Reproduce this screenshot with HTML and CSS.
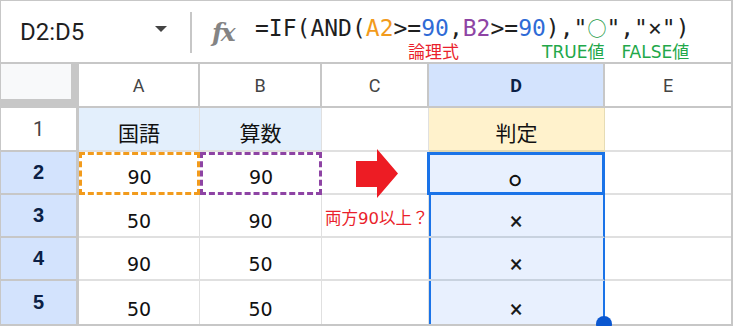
FILE: index.html
```html
<!DOCTYPE html>
<html lang="ja">
<head>
    <meta charset="UTF-8">
    <title>IF関数</title>
    <link rel="stylesheet" href="styles.css">
</head>
<body>
    <div class="frame">
        <div class="formula-bar">
            <div class="name-box">
                <span class="name">D2:D5</span>
                <span class="caret"></span>
            </div>
            <div class="divider"></div>
            <span class="fx">fx</span>
            <div class="formula">
                <div class="code">=IF(AND(<span class="ref-a">A2</span>&gt;=<span class="num">90</span>,<span class="ref-b">B2</span>&gt;=<span class="num">90</span>),"<span class="str">○</span>","<span class="x">×</span>")</div>
                <div class="notes">
                    <span class="note red">論理式</span>
                    <span class="note green true">TRUE値</span>
                    <span class="note green false">FALSE値</span>
                </div>
            </div>
        </div>

        <div class="grid">
            <div class="corner"><div class="corner-inner"></div></div>
            <div class="cell col-head">A</div>
            <div class="cell col-head">B</div>
            <div class="cell col-head">C</div>
            <div class="cell col-head on">D</div>
            <div class="cell col-head last">E</div>

            <div class="cell row-head plain">1</div>
            <div class="cell title">国語</div>
            <div class="cell title">算数</div>
            <div class="cell"></div>
            <div class="cell result-title">判定</div>
            <div class="cell last"></div>

            <div class="cell row-head">2</div>
            <div class="cell copy-a">90</div>
            <div class="cell copy-b">90</div>
            <div class="cell arrow-cell">
                <svg width="42" height="49" viewBox="0 0 42 49"><polygon points="0,12 21,12 21,0 42,24.5 21,49 21,38 0,38" fill="#ed1c24"/></svg>
            </div>
            <div class="cell sel active"><span class="mark">○</span></div>
            <div class="cell last"></div>

            <div class="cell row-head">3</div>
            <div class="cell">50</div>
            <div class="cell">90</div>
            <div class="cell ask">両方90以上？</div>
            <div class="cell sel"><span class="cross">×</span></div>
            <div class="cell last"></div>

            <div class="cell row-head">4</div>
            <div class="cell">90</div>
            <div class="cell">50</div>
            <div class="cell"></div>
            <div class="cell sel"><span class="cross">×</span></div>
            <div class="cell last"></div>

            <div class="cell row-head bottom">5</div>
            <div class="cell bottom">50</div>
            <div class="cell bottom">50</div>
            <div class="cell bottom"></div>
            <div class="cell sel bottom"><span class="cross">×</span><span class="handle"></span></div>
            <div class="cell last bottom"></div>
        </div>
    </div>
</body>
</html>
```

FILE: styles.css
```css
* {
    margin: 0;
    padding: 0;
    box-sizing: border-box;
}

body {
    background: #fff;
    font-family: "DejaVu Sans", "Noto Sans CJK JP", sans-serif;
    color: #111;
}

.frame {
    width: 733px;
    border-top: 1px solid #c7c7c7;
    border-left: 1px solid #c7c7c7;
    border-right: 2px solid #c7c7c7;
    border-bottom: 2px solid #c7c7c7;
}

/* formula bar */

.formula-bar {
    display: flex;
    align-items: flex-start;
    height: 63px;
    border-bottom: 2px solid #c7c7c7;
}

.name-box {
    width: 189px;
    height: 61px;
    display: flex;
    align-items: center;
    justify-content: space-between;
    padding: 0 23px 0 19px;
}

.name {
    font: 24px Roboto, sans-serif;
    color: #1f1f1f;
}

.caret {
    border-left: 6px solid transparent;
    border-right: 6px solid transparent;
    border-top: 6px solid #444;
    margin-top: -6px;
}

.divider {
    width: 2px;
    height: 41px;
    margin-top: 11px;
    background: #c7c7c7;
}

.fx {
    margin: 17px 0 0 20px;
    width: 43px;
    font: italic bold 25px "DejaVu Serif", serif;
    color: #848484;
    letter-spacing: -2px;
}

.formula {
    padding-top: 13px;
}

.code {
    font: 23px "DejaVu Sans Mono", "Liberation Mono", monospace;
    line-height: 28px;
    color: #1f1f1f;
    white-space: nowrap;
}

.ref-a { color: #f29b1c; }
.ref-b { color: #8e44a4; }
.num { color: #2f6bd6; }

.str {
    color: #1e9b48;
    font-family: "Noto Sans CJK JP", sans-serif;
    font-size: 19px;
}

.notes {
    display: flex;
    font-size: 17px;
    line-height: 20px;
}

.note.red {
    color: #ea1f2c;
    margin-left: 153px;
}

.note.green {
    color: #22a84a;
}

.note.true {
    margin-left: 83px;
}

.note.false {
    margin-left: 17px;
}

/* grid */

.grid {
    display: grid;
    grid-template-columns: 78px 121px 122px 107px 176px 126px;
    grid-template-rows: 44px 44px 43px 43px 43px 43px;
}

.corner {
    background: #c7c7c7;
    padding: 0 8px 9px 0;
}

.corner-inner {
    height: 100%;
    background: #f8f9fa;
}

.cell {
    display: flex;
    align-items: flex-end;
    justify-content: center;
    padding-bottom: 3px;
    border-right: 1px solid #e0e0e0;
    border-bottom: 2px solid #e0e0e0;
    font-size: 19px;
    line-height: 24px;
}

.cell.last {
    border-right: none;
}

.cell.bottom {
    border-bottom: none;
}

.col-head {
    align-items: center;
    padding: 0;
    font: 18px Roboto, sans-serif;
    color: #444;
    border-right: 2px solid #c7c7c7;
    border-bottom: 2px solid #c7c7c7;
}

.col-head.on {
    background: #d3e3fd;
    color: #0b1f46;
    font-weight: bold;
}

.row-head {
    align-items: center;
    padding: 0;
    background: #d3e3fd;
    border-right: 3px solid #c7c7c7;
    border-bottom: 2px solid #c7c7c7;
    font: bold 20px "Liberation Sans", sans-serif;
    color: #0b1f46;
}

.row-head.plain {
    background: #fff;
    font-weight: normal;
    font-family: Roboto, sans-serif;
    color: #444;
}

.row-head.bottom {
    border-bottom: none;
}

.title {
    background: #e3effc;
    font-size: 21px;
    line-height: 26px;
}

.result-title {
    background: #fff2cc;
    border-right-color: #e6dcb5;
    border-bottom-color: #e0d6b0;
    font-size: 21px;
    line-height: 26px;
}

.copy-a {
    border: 3px dashed #f29b1c;
}

.copy-b {
    border: 3px dashed #8e44a4;
}

.arrow-cell {
    align-items: center;
    padding: 0 0 0 3px;
}

.arrow-cell svg {
    display: block;
    margin-top: 1px;
}

.ask {
    justify-content: flex-start;
    padding-left: 3px;
    padding-bottom: 5px;
    font-size: 16.5px;
    color: #ea1f2c;
    white-space: nowrap;
}

.sel {
    position: relative;
    background: #e8f0fe;
    border-right: 2px solid #1a73e8;
    border-bottom-color: #c8d2df;
    box-shadow: inset 2px 0 0 #1a73e8;
}

.sel.active {
    outline: 3px solid #1a73e8;
    outline-offset: -3px;
    margin-left: -2px;
}

.mark {
    font-size: 13px;
    line-height: 20px;
    -webkit-text-stroke: 1.2px #111;
}

.cross {
    font-size: 17px;
    -webkit-text-stroke: 0.6px #111;
}

.handle {
    position: absolute;
    right: -9px;
    bottom: -8px;
    width: 16px;
    height: 16px;
    border-radius: 50%;
    background: #0b57d0;
}
```
